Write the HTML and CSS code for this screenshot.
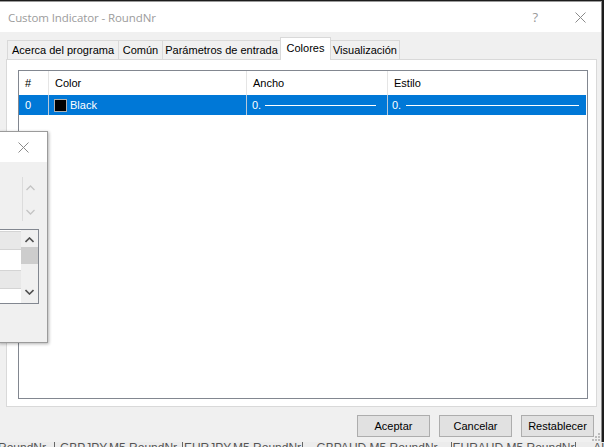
FILE: index.html
```html
<!DOCTYPE html>
<html lang="es">
<head>
    <meta charset="UTF-8">
    <title>Custom Indicator - RoundNr</title>
    <link rel="stylesheet" href="styles.css">
</head>
<body>
    <!-- Main dialog -->
    <div class="dialog">
        <div class="titlebar">
            <span class="title">Custom Indicator - RoundNr</span>
            <span class="help">?</span>
            <svg class="close" width="11" height="11" viewBox="0 0 11 11">
                <path d="M0.5 0.5 L10.5 10.5 M10.5 0.5 L0.5 10.5" stroke="#8a8a8a" stroke-width="1" fill="none"/>
            </svg>
        </div>

        <div class="dlg-body">
            <div class="tabs">
                <div class="tab tab-about">Acerca del programa</div>
                <div class="tab tab-common">Común</div>
                <div class="tab tab-params">Parámetros de entrada</div>
                <div class="tab tab-colors active">Colores</div>
                <div class="tab tab-view">Visualización</div>
            </div>

            <div class="panel">
                <div class="list">
                    <div class="list-row list-head">
                        <div class="cell c-num">#</div>
                        <div class="cell c-color">Color</div>
                        <div class="cell c-width">Ancho</div>
                        <div class="cell c-style">Estilo</div>
                    </div>
                    <div class="list-row selected">
                        <div class="cell c-num">0</div>
                        <div class="cell c-color"><span class="swatch"></span>Black</div>
                        <div class="cell c-width">0.<span class="line line-width"></span></div>
                        <div class="cell c-style">0.<span class="line line-style"></span></div>
                    </div>
                </div>
            </div>

            <div class="buttons">
                <button class="btn">Aceptar</button>
                <button class="btn">Cancelar</button>
                <button class="btn">Restablecer</button>
            </div>
        </div>

        <svg class="grip" width="10" height="10" viewBox="0 0 10 10">
            <rect x="7" y="1" width="2" height="2" fill="#bcbcbc"/>
            <rect x="4" y="4" width="2" height="2" fill="#bcbcbc"/>
            <rect x="7" y="4" width="2" height="2" fill="#bcbcbc"/>
            <rect x="1" y="7" width="2" height="2" fill="#bcbcbc"/>
            <rect x="4" y="7" width="2" height="2" fill="#bcbcbc"/>
            <rect x="7" y="7" width="2" height="2" fill="#bcbcbc"/>
        </svg>
    </div>

    <!-- Window tabs of the terminal behind, mostly hidden -->
    <div class="taskstrip">
        <div class="strip-inner">
            <span class="chart-tab w1">EURUSD,M5 RoundNr</span>
            <span class="chart-tab w2">GBPJPY,M5 RoundNr</span>
            <span class="chart-tab w3">EURJPY,M5 RoundNr</span>
            <span class="chart-tab w4">GBPAUD,M5 RoundNr</span>
            <span class="chart-tab w5">EURAUD,M5 RoundNr</span>
            <span class="chart-tab w6">AUD</span>
        </div>
    </div>

    <!-- Small window lying over the dialog -->
    <div class="popup">
        <div class="popup-title">
            <svg width="11" height="11" viewBox="0 0 11 11">
                <path d="M0.5 0.5 L10.5 10.5 M10.5 0.5 L0.5 10.5" stroke="#8a8a8a" stroke-width="1" fill="none"/>
            </svg>
        </div>
        <div class="spin">
            <svg width="9" height="6" viewBox="0 0 9 6"><path d="M0.5 5 L4.5 1 L8.5 5" stroke="#c4c4c4" stroke-width="1.3" fill="none"/></svg>
            <svg width="9" height="6" viewBox="0 0 9 6"><path d="M0.5 1 L4.5 5 L8.5 1" stroke="#c4c4c4" stroke-width="1.3" fill="none"/></svg>
        </div>
        <div class="listbox">
            <div class="lb-rows">
                <div class="lb-row grey"></div>
                <div class="lb-row"></div>
                <div class="lb-row grey"></div>
                <div class="lb-row"></div>
            </div>
            <div class="scrollbar">
                <svg width="9" height="6" viewBox="0 0 9 6"><path d="M0.5 5 L4.5 1 L8.5 5" stroke="#505050" stroke-width="1.6" fill="none"/></svg>
                <div class="thumb"></div>
                <svg class="sb-down" width="9" height="6" viewBox="0 0 9 6"><path d="M0.5 1 L4.5 5 L8.5 1" stroke="#505050" stroke-width="1.6" fill="none"/></svg>
            </div>
        </div>
    </div>
</body>
</html>
```

FILE: styles.css
```css
body {
    margin: 0;
    width: 604px;
    height: 447px;
    overflow: hidden;
    background-color: #1c1c1c;
    font-family: "Liberation Sans", Arial, sans-serif;
    font-size: 11px;
    color: #000;
    position: relative;
}

.dialog {
    position: relative;
    margin-top: 1px;
    width: 602px;
    height: 441px;
    box-sizing: border-box;
    border-top: 1px solid #9a9a9a;
    border-right: 1px solid #8c8c8c;
    background-color: #f0f0f0;
}

/* Title bar */
.titlebar {
    height: 30px;
    background-color: #fff;
    display: flex;
    align-items: center;
}

.title {
    font-family: "Open Sans", "Liberation Sans", sans-serif;
    font-size: 11.5px;
    color: #9c9c9c;
    margin-left: 8px;
    flex: 1;
    letter-spacing: -0.1px;
}

.help {
    font-family: "Open Sans", "Liberation Sans", sans-serif;
    font-size: 13px;
    color: #9a9a9a;
    margin-right: 37px;
}

.close {
    margin-right: 15px;
}

/* Body */
.dlg-body {
    padding-top: 5px;
}

.tabs {
    height: 22px;
    display: flex;
    align-items: flex-end;
    padding-left: 7px;
    position: relative;
    z-index: 1;
}

.tab {
    height: 19px;
    box-sizing: border-box;
    border: 1px solid #d9d9d9;
    border-bottom: none;
    margin-left: -1px;
    background-color: #f0f0f0;
    text-align: center;
    line-height: 18px;
    white-space: nowrap;
}

.tab:first-child {
    margin-left: 0;
}

.tab-about { width: 112px; }
.tab-common { width: 45px; }
.tab-params { width: 119px; }
.tab-colors { width: 51px; }
.tab-view { width: 70px; }

.tab.active {
    height: 23px;
    margin-bottom: -1px;
    background-color: #fff;
    line-height: 20px;
}

.panel {
    margin-left: 6px;
    width: 591px;
    height: 348px;
    box-sizing: border-box;
    border: 1px solid #d9d9d9;
    background-color: #fff;
    padding: 10px 8px 7px 11px;
    display: flex;
}

.list {
    flex: 1;
    border: 1px solid #828790;
    background-color: #fff;
}

.list-row {
    display: flex;
    height: 20px;
    align-items: stretch;
}

.list-head {
    height: 24px;
}

.cell {
    box-sizing: border-box;
    display: flex;
    align-items: center;
    white-space: nowrap;
}

.c-num {
    width: 30px;
    padding-left: 6px;
    border-right: 1px solid #e5e5e5;
}

.c-color {
    width: 198px;
    padding-left: 6px;
    border-right: 1px solid #e5e5e5;
}

.c-width {
    width: 141px;
    padding-left: 6px;
    border-right: 1px solid #e5e5e5;
}

.c-style {
    flex: 1;
    padding-left: 6px;
}

.selected {
    background-color: #0078d7;
    color: #fff;
    margin-right: 1px;
}

.selected .c-num,
.selected .c-color,
.selected .c-width {
    border-right-color: #b7c9da;
}

.selected .c-color {
    padding-left: 5px;
}

.selected .c-width {
    padding-left: 5px;
}

.selected .c-style {
    padding-left: 4px;
}

.swatch {
    width: 11px;
    height: 11px;
    border: 1px solid #b0b0b0;
    background-color: #000;
    margin-right: 3px;
}

.line {
    flex: 1;
    height: 1px;
    background-color: #fff;
}

.line-width {
    margin-left: 4px;
    margin-right: 11px;
}

.line-style {
    margin-left: 5px;
    margin-right: 7px;
}

/* Buttons */
.buttons {
    display: flex;
    justify-content: flex-end;
    gap: 9px;
    margin-top: 8px;
    padding-right: 7px;
}

.btn {
    width: 73px;
    height: 22px;
    border: 1px solid #adadad;
    background-color: #e1e1e1;
    font-family: "Liberation Sans", Arial, sans-serif;
    font-size: 11px;
    color: #000;
    padding: 0;
}

.grip {
    position: absolute;
    right: 0;
    bottom: 0;
}

/* Terminal strip behind */
.taskstrip {
    height: 5px;
    overflow: hidden;
    background-color: #ececec;
}

.strip-inner {
    display: flex;
    margin-left: -84px;
    margin-top: -1px;
    color: #555;
    font-size: 12px;
    line-height: 14px;
}

.chart-tab {
    flex: none;
    border-right: 1px solid #666;
    text-align: center;
    white-space: nowrap;
    overflow: hidden;
}

.w1 { width: 138px; }
.w2 { width: 127px; }
.w3 { width: 119px; }
.w4 { width: 148px; }
.w5 { width: 123px; }
.w6 { width: 60px; border-right: none; }

/* Popup window */
.popup {
    position: absolute;
    left: -2px;
    top: 131px;
    width: 50px;
    height: 212px;
    box-sizing: border-box;
    border: 1px solid #9b9b9b;
    background-color: #f0f0f0;
    box-shadow: 1px 1px 3px rgba(0, 0, 0, 0.3);
}

.popup-title {
    height: 30px;
    background-color: #fff;
    display: flex;
    align-items: center;
    justify-content: flex-end;
    padding-right: 18px;
}

.spin {
    margin-top: 15px;
    margin-left: 23px;
    width: 16px;
    height: 44px;
    border-left: 1px solid #dcdcdc;
    display: flex;
    flex-direction: column;
    align-items: center;
    justify-content: space-between;
    padding: 8px 0 6px;
    box-sizing: border-box;
}

.listbox {
    margin-top: 8px;
    width: 40px;
    height: 75px;
    box-sizing: border-box;
    border: 1px solid #828790;
    background-color: #fff;
    display: flex;
    overflow: hidden;
}

.lb-rows {
    width: 21px;
    padding-top: 1px;
    overflow: hidden;
}

.lb-row {
    height: 19px;
    border-bottom: 1px solid #fff;
}

.lb-row.grey {
    background-color: #e8e8e8;
    border-top: 1px solid #d4d4d4;
    border-bottom: 1px solid #d4d4d4;
    height: 17px;
}

.scrollbar {
    width: 17px;
    background-color: #f0f0f0;
    display: flex;
    flex-direction: column;
    align-items: center;
    padding-top: 7px;
    box-sizing: border-box;
}

.thumb {
    width: 17px;
    height: 17px;
    background-color: #cdcdcd;
    margin-top: 4px;
}

.sb-down {
    margin-top: 25px;
}
```
